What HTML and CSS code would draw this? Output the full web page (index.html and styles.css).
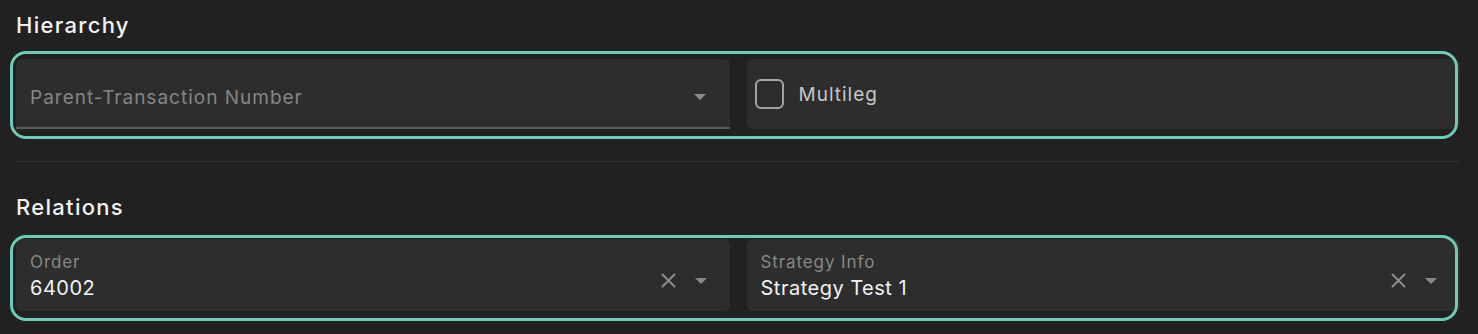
FILE: index.html
```html
<!DOCTYPE html>
<html lang="en">
<head>
<meta charset="utf-8">
<title>Hierarchy and Relations</title>
<link rel="stylesheet" href="styles.css">
</head>
<body>
<div class="page">
  <h2 class="section-title title-first">Hierarchy</h2>
  <div class="group group-hierarchy">
    <div class="field field-select">
      <span class="placeholder">Parent-Transaction Number</span>
      <span class="adorn">
        <svg class="caret" width="12" height="6" viewBox="0 0 12 6"><polygon points="0,0 12,0 6,6" fill="#8a8a8a"/></svg>
      </span>
    </div>
    <div class="field field-check">
      <span class="checkbox"></span>
      <span class="check-label">Multileg</span>
    </div>
  </div>

  <div class="divider"></div>

  <h2 class="section-title title-second">Relations</h2>
  <div class="group group-relations">
    <div class="field field-value">
      <div class="value-block">
        <div class="label">Order</div>
        <div class="value">64002</div>
      </div>
      <span class="adorn">
        <svg class="clear" width="15" height="15" viewBox="0 0 15 15"><path d="M1.5 1.5 L13.5 13.5 M13.5 1.5 L1.5 13.5" stroke="#8c8c8c" stroke-width="2" stroke-linecap="round"/></svg>
        <svg class="caret" width="12" height="6" viewBox="0 0 12 6"><polygon points="0,0 12,0 6,6" fill="#8a8a8a"/></svg>
      </span>
    </div>
    <div class="field field-value">
      <div class="value-block">
        <div class="label">Strategy Info</div>
        <div class="value">Strategy Test 1</div>
      </div>
      <span class="adorn">
        <svg class="clear" width="15" height="15" viewBox="0 0 15 15"><path d="M1.5 1.5 L13.5 13.5 M13.5 1.5 L1.5 13.5" stroke="#8c8c8c" stroke-width="2" stroke-linecap="round"/></svg>
        <svg class="caret" width="12" height="6" viewBox="0 0 12 6"><polygon points="0,0 12,0 6,6" fill="#8a8a8a"/></svg>
      </span>
    </div>
  </div>
</div>
</body>
</html>
```

FILE: styles.css
```css
* { box-sizing: border-box; }
html, body {
  margin: 0;
  padding: 0;
  background: #212121;
}
body {
  font-family: Inter, "Noto Sans", "Liberation Sans", sans-serif;
  color: #f0f0f0;
  height: 334px;
  overflow: hidden;
}
.page {
  padding: 0 18px 0 16px;
}
.section-title {
  margin: 0;
  font-size: 22px;
  line-height: 28px;
  font-weight: 500;
  letter-spacing: 1.3px;
  color: #f2f2f2;
}
.title-first { padding-top: 11px; }
.title-second { margin-top: 31px; }

.group {
  position: relative;
  display: grid;
  grid-template-columns: 1fr 1fr;
  column-gap: 17px;
}
.group::after {
  content: "";
  position: absolute;
  border: 3px solid #6ecbb8;
  border-radius: 16px;
  pointer-events: none;
}
.group-hierarchy {
  margin-top: 12px;
  padding: 8px 0 10px;
}
.group-hierarchy::after {
  top: 0; bottom: 0; left: -6px; right: 2px;
}
.group-relations {
  margin-top: 14px;
  padding: 4px 0 10px;
}
.group-relations::after {
  top: 0; bottom: 0; left: -6px; right: 2px;
}

.field {
  background: #2d2d2d;
  border-radius: 6px;
  display: flex;
  align-items: center;
}
.field-select {
  height: 70px;
  border-radius: 6px 6px 0 0;
  border-bottom: 2px solid #5c5c5c;
  padding: 8px 24px 0 14px;
}
.placeholder {
  flex: 1;
  font-size: 19px;
  letter-spacing: 1px;
  color: #858585;
}
.adorn {
  display: flex;
  align-items: center;
}
.clear { margin-right: 19px; }

.field-check {
  height: 70px;
  padding-left: 8px;
}
.checkbox {
  width: 29px;
  height: 30px;
  border: 2px solid #a3a3a3;
  border-radius: 6px;
  margin-right: 15px;
}
.check-label {
  font-size: 19px;
  letter-spacing: 1px;
  color: #c6c6c6;
}

.field-value {
  height: 72px;
  align-items: flex-start;
  padding: 13px 23px 0 14px;
}
.value-block { flex: 1; }
.label {
  font-size: 17px;
  line-height: 21px;
  letter-spacing: 0.9px;
  color: #878787;
  margin-bottom: 3px;
}
.value {
  font-size: 20px;
  line-height: 25px;
  letter-spacing: 0.5px;
  color: #f2f2f2;
}
.field-value .adorn {
  margin-top: 21px;
}

.divider {
  margin-top: 22px;
  height: 1px;
  background: #323232;
}
```
